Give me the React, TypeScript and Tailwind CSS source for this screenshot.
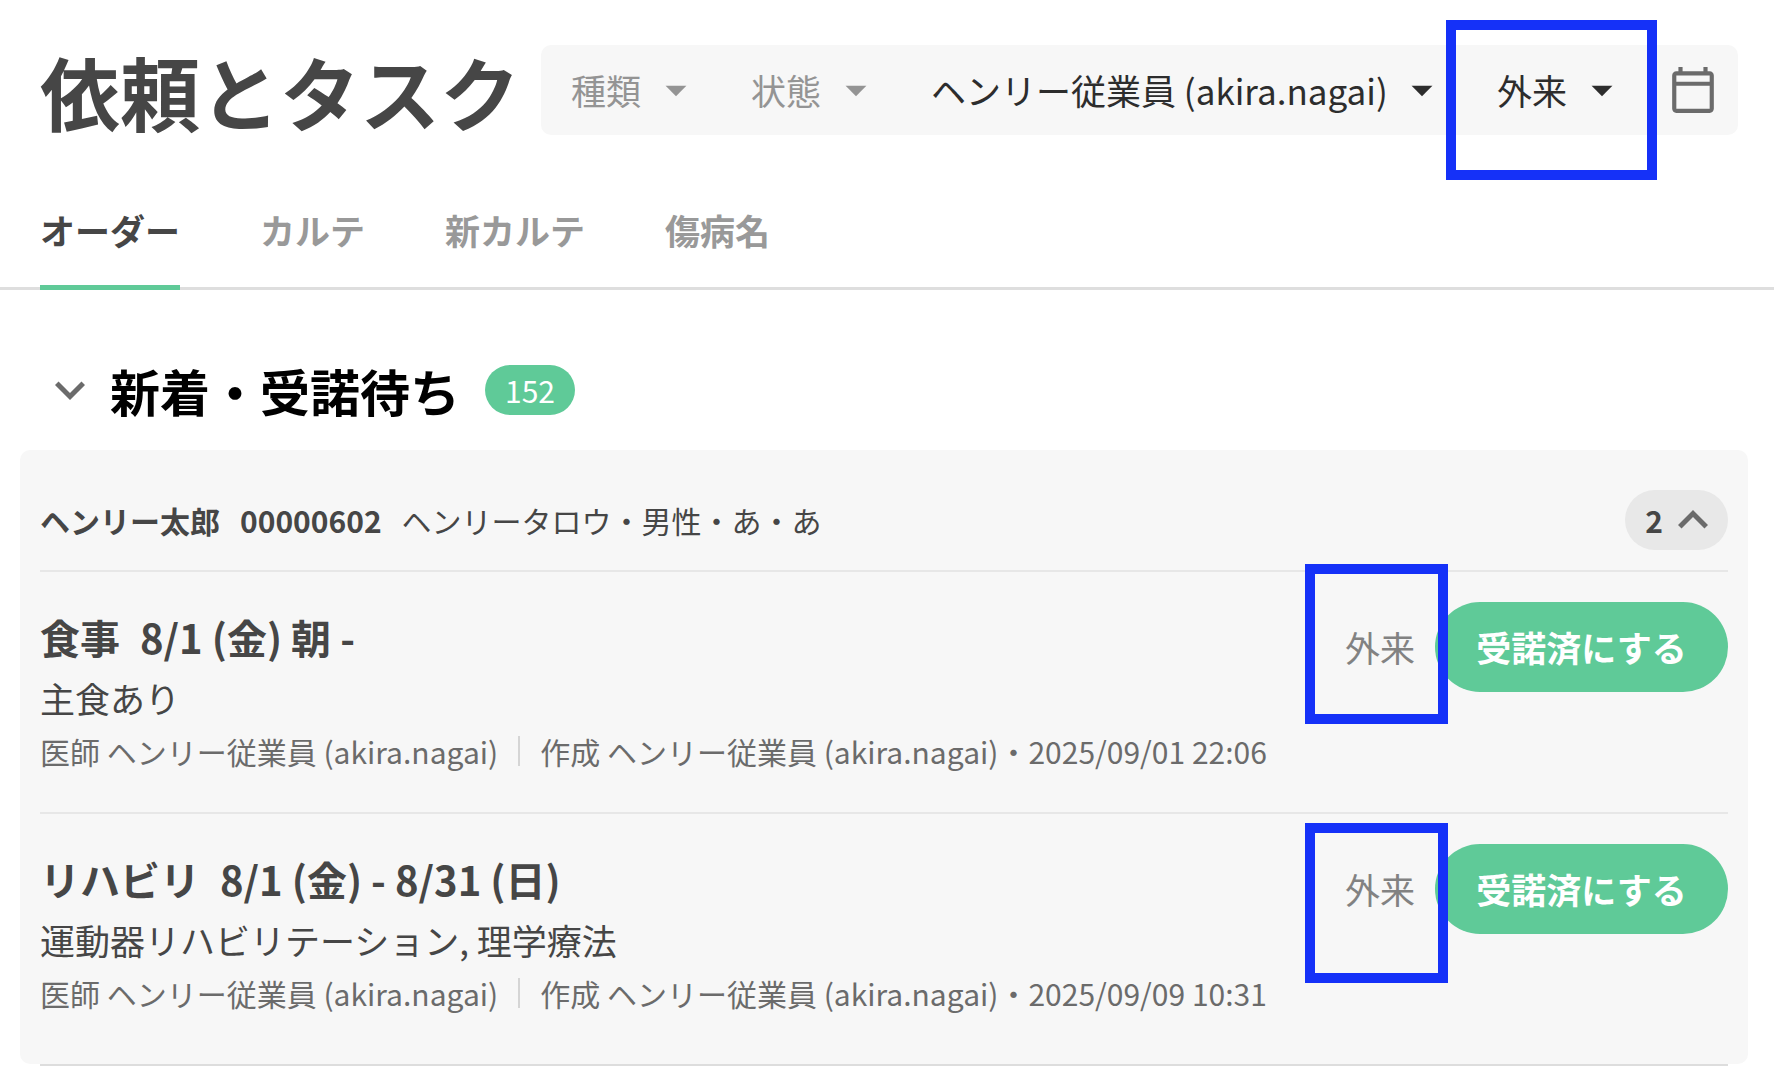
import { useState } from 'react';
import type { ReactNode } from 'react';

type Order = {
  id: number;
  kind: string;
  period: string;
  detail: string;
  doctor: string;
  author: string;
  createdAt: string;
  markClass: string;
};

const filters = [
  { id: 'kind', name: '種類', value: '種類', active: false, marked: false },
  { id: 'status', name: '状態', value: '状態', active: false, marked: false },
  { id: 'staff', name: '担当者', value: 'ヘンリー従業員 (akira.nagai)', active: true, marked: false },
  { id: 'visit', name: '入外区分', value: '外来', active: true, marked: true },
];

const tabs = ['オーダー', 'カルテ', '新カルテ', '傷病名'];

const orders: Order[] = [
  {
    id: 1,
    kind: '食事',
    period: '8/1 (金) 朝 -',
    detail: '主食あり',
    doctor: 'ヘンリー従業員 (akira.nagai)',
    author: 'ヘンリー従業員 (akira.nagai)',
    createdAt: '2025/09/01 22:06',
    markClass: '-top-[38px]',
  },
  {
    id: 2,
    kind: 'リハビリ',
    period: '8/1 (金) - 8/31 (日)',
    detail: '運動器リハビリテーション, 理学療法',
    doctor: 'ヘンリー従業員 (akira.nagai)',
    author: 'ヘンリー従業員 (akira.nagai)',
    createdAt: '2025/09/09 10:31',
    markClass: '-top-[21px]',
  },
];

function Icon({ d, className }: { d: string; className: string }) {
  return (
    <svg viewBox="0 0 24 24" fill="currentColor" aria-hidden="true" className={`shrink-0 ${className}`}>
      <path d={d} />
    </svg>
  );
}

function Mark({ className }: { className: string }) {
  return <span className={`pointer-events-none absolute z-10 border-10 border-[#1531f8] ${className}`} />;
}

function Filter({ id, name, active, children }: { id: string; name: string; active: boolean; children: ReactNode }) {
  return (
    <div className={`grid items-center ${active ? 'text-[#2d2d2d]' : 'text-[#949494]'}`}>
      <select
        id={id}
        aria-label={name}
        className="col-start-1 row-start-1 h-[90px] appearance-none bg-transparent pr-[79px] pl-[30px] text-[35px] leading-[50px]"
      >
        {children}
      </select>
      <Icon
        d="M7 10l5 5 5-5z"
        className="pointer-events-none col-start-1 row-start-1 mr-5 size-[50px] justify-self-end"
      />
    </div>
  );
}

function OrderRow({ order }: { order: Order }) {
  return (
    <li className="flex items-start justify-between border-t-2 border-[#e7e7e7] pt-[30px] pb-[34px]">
      <div>
        <h3 className="flex gap-5 text-[40px] leading-[70px] font-bold">
          <span>{order.kind}</span>
          <span>{order.period}</span>
        </h3>
        <p className="text-[35px] leading-[52px]">{order.detail}</p>
        <p className="flex items-center gap-5 text-[30px] leading-[54px] text-[#6b6b6b]">
          <span>医師 {order.doctor}</span>
          <span className="h-[30px] w-0.5 bg-[#d5d5d5]" />
          <span>
            作成 {order.author}・{order.createdAt}
          </span>
        </p>
      </div>
      <div className="relative flex shrink-0 items-center gap-5">
        <span className="text-[35px] leading-[50px] text-[#828282]">外来</span>
        <button
          type="button"
          className="h-[90px] w-[293px] rounded-full bg-[#5fca98] text-[35px] leading-[50px] font-bold text-white"
        >
          受諾済にする
        </button>
        <Mark className={`-left-10 h-40 w-[143px] ${order.markClass}`} />
      </div>
    </li>
  );
}

export default function App() {
  const [tab, setTab] = useState(tabs[0]);
  const [open, setOpen] = useState(true);

  return (
    <main className="min-h-screen bg-white pb-5 font-['Noto_Sans_CJK_JP',sans-serif] whitespace-nowrap text-[#464646]">
      <header className="flex items-center gap-[21px] pt-[45px] pr-9 pl-10">
        <h1 className="text-[80px] leading-[90px] font-bold">依頼とタスク</h1>
        <div className="flex h-[90px] flex-1 items-center rounded-[10px] bg-[#f7f7f7] pr-5">
          {filters.map((f) => (
            <div key={f.id} className="relative">
              <Filter id={f.id} name={f.name} active={f.active}>
                <option>{f.value}</option>
              </Filter>
              {f.marked && <Mark className="-top-[25px] -right-2.5 -bottom-[45px] -left-[21px]" />}
            </div>
          ))}
          <button type="button" aria-label="日付" className="ml-auto text-[#6b6b6b]">
            <Icon
              d="M20 3h-1V1h-2v2H7V1H5v2H4c-1.1 0-2 .9-2 2v16c0 1.1.9 2 2 2h16c1.1 0 2-.9 2-2V5c0-1.1-.9-2-2-2zm0 18H4V10h16v11zm0-13H4V5h16v3z"
              className="size-[50px]"
            />
          </button>
        </div>
      </header>

      <nav role="tablist" className="mt-10 flex gap-20 px-10 shadow-[inset_0_-3px_0_#dedede]">
        {tabs.map((t) => (
          <button
            key={t}
            type="button"
            role="tab"
            aria-selected={t === tab}
            onClick={() => setTab(t)}
            className={`h-[115px] border-b-5 text-[35px] leading-[50px] font-bold ${
              t === tab ? 'border-[#5fca98]' : 'border-transparent text-[#999999]'
            }`}
          >
            {t}
          </button>
        ))}
      </nav>

      <section>
        <div className="mt-[70px] flex h-[60px] items-center pl-10">
          <button type="button" aria-label="折りたたむ" className="mr-2.5 text-[#6b6b6b]">
            <Icon d="M16.59 8.59L12 13.17 7.41 8.59 6 10l6 6 6-6z" className="size-[60px]" />
          </button>
          <h2 className="text-[50px] leading-[60px] font-bold text-black">新着・受諾待ち</h2>
          <span className="ml-[25px] rounded-full bg-[#5fca98] px-5 text-[30px] leading-[50px] text-white">152</span>
        </div>

        <div className="mt-[30px] mr-[26px] ml-5 rounded-[10px] bg-[#f7f7f7] px-5 pt-10 pb-2.5">
          <div className="flex items-center gap-5 pb-5 text-[30px] leading-[60px]">
            <span className="font-bold">ヘンリー太郎</span>
            <span className="font-bold">00000602</span>
            <span>ヘンリータロウ・男性・あ・あ</span>
            <button
              type="button"
              aria-expanded={open}
              onClick={() => setOpen(!open)}
              className="ml-auto flex items-center rounded-full bg-[#e8e8e8] pr-[5px] pl-5 font-bold"
            >
              2
              <Icon
                d="M12 8l-6 6 1.41 1.41L12 10.83l4.59 4.58L18 14z"
                className={`size-[60px] text-[#6b6b6b] ${open ? '' : 'rotate-180'}`}
              />
            </button>
          </div>
          {open && (
            <ul>
              {orders.map((order) => (
                <OrderRow key={order.id} order={order} />
              ))}
            </ul>
          )}
        </div>
        <hr className="mr-[46px] ml-10 border-t-2 border-[#dddddd]" />
      </section>
    </main>
  );
}
